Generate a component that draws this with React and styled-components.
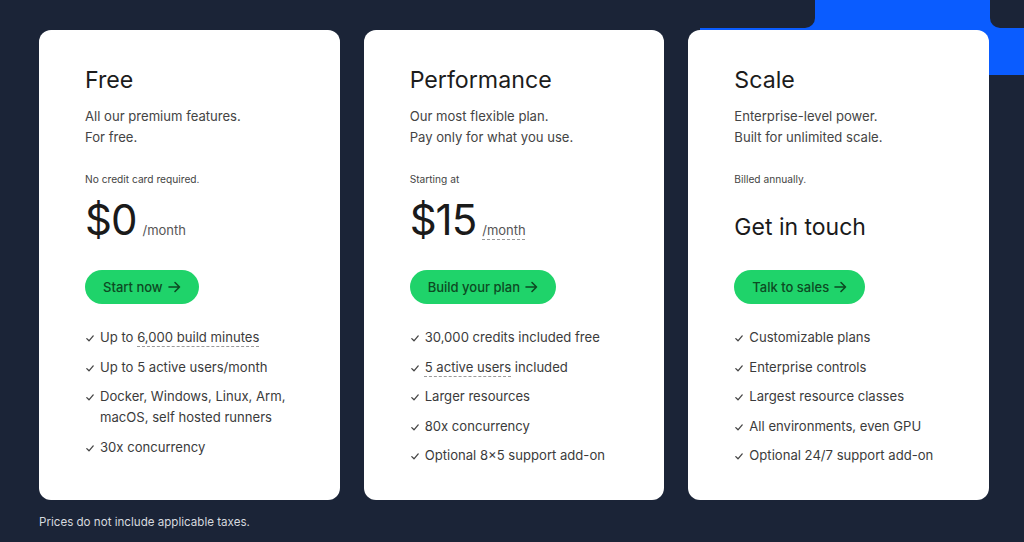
import React from "react";
import styled, { createGlobalStyle } from "styled-components";

const GlobalStyle = createGlobalStyle`
  html, body {
    margin: 0;
    padding: 0;
    background: #1b2437;
    font-family: Inter, "Noto Sans", "Liberation Sans", sans-serif;
  }
`;

const Page = styled.div`
  position: relative;
  height: 542px;
  overflow: hidden;
  box-sizing: border-box;
  padding: 30px 35px 0 39px;
`;

const Decoration = styled.svg`
  position: absolute;
  top: 0;
  right: 0;
  z-index: 0;
`;

const Grid = styled.div`
  position: relative;
  z-index: 1;
  display: grid;
  grid-template-columns: repeat(3, 1fr);
  gap: 24px;
  width: 950px;
`;

const Card = styled.div`
  background: #ffffff;
  border-radius: 12px;
  height: 470px;
  box-sizing: border-box;
  padding: 36px 46px;
  display: flex;
  flex-direction: column;

  & > * {
    flex-shrink: 0;
  }
`;

const Title = styled.h2`
  margin: 0;
  font-size: 23.2px;
  line-height: 29px;
  font-weight: 400;
  color: #1c1c1c;
`;

const Subtitle = styled.p`
  margin: 11px 0 0;
  font-size: 13.1px;
  line-height: 21px;
  color: #444;
`;

const Note = styled.div`
  margin-top: 23px;
  font-size: 10.2px;
  line-height: 16px;
  color: #444;
`;

const PriceRow = styled.div`
  margin-top: 6px;
  height: 53px;
  font-size: 42px;
  line-height: 53px;
  color: #1a1a1a;
  white-space: nowrap;
`;

const Amount = styled.span`
  font-size: ${(p) => (p.$text ? "23px" : "42px")};
  letter-spacing: ${(p) => (p.$text ? "0" : "-1px")};
`;

const Period = styled.span`
  margin-left: 6px;
  font-size: 13px;
  color: #555;
  ${(p) =>
    p.$dotted &&
    `text-decoration: underline dashed #999; text-decoration-thickness: 1px; text-underline-offset: 4px;`}
`;

const Button = styled.button`
  align-self: flex-start;
  margin-top: 24px;
  height: 34px;
  padding: 0 18px;
  border: none;
  border-radius: 17px;
  background: #1fd36a;
  color: #0d4a23;
  font-family: inherit;
  font-size: 13px;
  font-weight: 500;
  display: flex;
  align-items: center;
  gap: 5px;
  cursor: pointer;
`;

const List = styled.ul`
  list-style: none;
  margin: 23px 0 0;
  padding: 0;
  display: flex;
  flex-direction: column;
  gap: 8.5px;
`;

const Item = styled.li`
  display: flex;
  align-items: flex-start;
  font-size: 13.1px;
  line-height: 21px;
  color: #3b3b3b;
`;

const Check = styled.svg`
  flex: none;
  margin: 8px 6px 0 1px;
`;

const Dotted = styled.span`
  text-decoration: underline dashed #9a9a9a;
  text-decoration-thickness: 1px;
  text-underline-offset: 4px;
`;

const Footer = styled.div`
  position: relative;
  z-index: 1;
  margin-top: 14px;
  font-size: 11.6px;
  line-height: 16px;
  color: #d6d9df;
`;

const Arrow = () => (
  <svg width="13" height="12" viewBox="0 0 13 12" fill="none">
    <path
      d="M1 6h10.5M7 1.5L11.5 6 7 10.5"
      stroke="currentColor"
      strokeWidth="1.6"
      strokeLinecap="round"
      strokeLinejoin="round"
    />
  </svg>
);

const CheckIcon = () => (
  <Check width="8" height="7" viewBox="0 0 8 7" fill="none">
    <path
      d="M0.8 3.6L3 5.8 7.2 0.9"
      stroke="#444"
      strokeWidth="1.3"
      strokeLinecap="round"
      strokeLinejoin="round"
    />
  </Check>
);

const plans = [
  {
    name: "Free",
    lines: ["All our premium features.", "For free."],
    note: "No credit card required.",
    amount: "$0",
    period: "/month",
    cta: "Start now",
    features: [
      <>
        Up to <Dotted>6,000 build minutes</Dotted>
      </>,
      "Up to 5 active users/month",
      <>
        Docker, Windows, Linux, Arm,
        <br />
        macOS, self hosted runners
      </>,
      "30x concurrency",
    ],
  },
  {
    name: "Performance",
    lines: ["Our most flexible plan.", "Pay only for what you use."],
    note: "Starting at",
    amount: "$15",
    period: "/month",
    dotted: true,
    cta: "Build your plan",
    features: [
      "30,000 credits included free",
      <>
        <Dotted>5 active users</Dotted> included
      </>,
      "Larger resources",
      "80x concurrency",
      "Optional 8×5 support add-on",
    ],
  },
  {
    name: "Scale",
    lines: ["Enterprise-level power.", "Built for unlimited scale."],
    note: "Billed annually.",
    amount: "Get in touch",
    text: true,
    cta: "Talk to sales",
    features: [
      "Customizable plans",
      "Enterprise controls",
      "Largest resource classes",
      "All environments, even GPU",
      "Optional 24/7 support add-on",
    ],
  },
];

const App = () => {
  return (
    <Page>
      <GlobalStyle />
      <Decoration width="324" height="90" viewBox="700 0 324 90">
        <rect x="700" y="-20" width="344" height="95" rx="10" fill="#0a5cff" />
        <rect x="660" y="-20" width="155" height="48" rx="10" fill="#1b2437" />
        <rect x="990" y="-20" width="60" height="48" rx="10" fill="#1b2437" />
      </Decoration>
      <Grid>
        {plans.map((plan) => (
          <Card key={plan.name}>
            <Title>{plan.name}</Title>
            <Subtitle>
              {plan.lines[0]}
              <br />
              {plan.lines[1]}
            </Subtitle>
            <Note>{plan.note}</Note>
            <PriceRow>
              <Amount $text={plan.text}>{plan.amount}</Amount>
              {plan.period && <Period $dotted={plan.dotted}>{plan.period}</Period>}
            </PriceRow>
            <Button>
              {plan.cta} <Arrow />
            </Button>
            <List>
              {plan.features.map((f, i) => (
                <Item key={i}>
                  <CheckIcon />
                  <span>{f}</span>
                </Item>
              ))}
            </List>
          </Card>
        ))}
      </Grid>
      <Footer>Prices do not include applicable taxes.</Footer>
    </Page>
  );
};

export default App;
